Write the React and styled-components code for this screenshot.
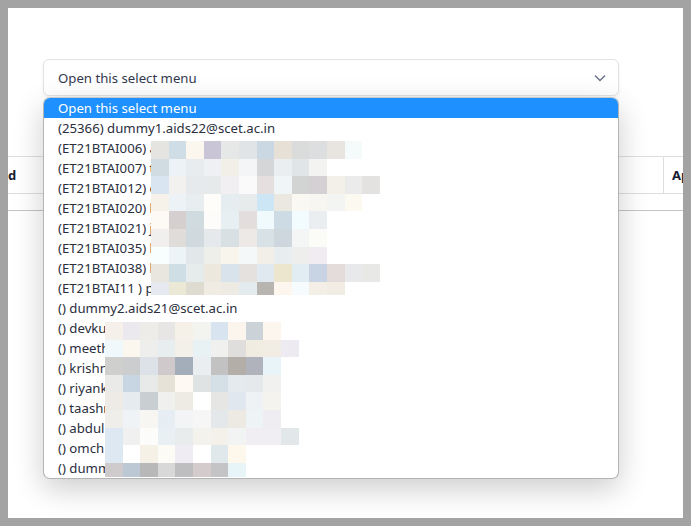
import React from 'react';
import styled, { createGlobalStyle } from 'styled-components';

const students = [
    '(25366) dummy1.aids22@scet.ac.in',
    '(ET21BTAI006) a',
    '(ET21BTAI007) t',
    '(ET21BTAI012) c',
    '(ET21BTAI020) h',
    '(ET21BTAI021) j',
    '(ET21BTAI035) h',
    '(ET21BTAI038) h',
    '(ET21BTAI11 ) p',
    '() dummy2.aids21@scet.ac.in',
    '() devku',
    '() meeth',
    '() krishn',
    '() riyank',
    '() taashn',
    '() abdul',
    '() omch',
    '() dumm',
];

const upperBlur = [
    ['e6e4e0', 'cfdde6', 'fbf6ee', 'c9c4d6', 'e6e8e8', 'e1e4e6', 'c9d8e2', 'e6e0d6', 'dadcdc', 'dcdee0', 'e8e5e0', 'f5fafa'],
    ['d0dce2', 'ecf2f5', 'e8ecee', 'eef0f3', 'f2efe8', 'f3f5f7', 'd4d6d8', 'ebeef0', 'e0e6e8', 'f3f3f1'],
    ['d9e5f0', 'f3f0f0', 'e6eaec', 'e6eaea', 'f2eff3', 'fafafa', 'e6dfdf', 'f0f6f7', 'd2d4d4', 'd4d0d4', 'f3f0ea', 'ecebeb', 'e4e2e0'],
    ['f6f2ea', 'ecf2f5', 'e8eef0', 'fefdfa', 'e6edf0', 'e8ebec', 'cde6f5', 'ebe8e2', 'faf8f2', 'f7f6f1', 'f3f5f3', 'fcf9f0'],
    ['fdfaf5', 'd6cfd0', 'd0dbe0', 'fdfcfa', 'e8eff2', 'e4dddd', 'f0f9fc', 'ccdbe4', 'f2fbfe', 'ebeef0'],
    ['f0efee', 'e0dcda', 'd0d9dd', 'e6e9eb', 'd8e0e4', 'ece9e6', 'd8e1e5', 'cfd7de', 'f4f5f5', 'fbfbf7'],
    ['f8fdfd', 'ecf4f7', 'e2e7e9', 'eeefea', 'f8f5ec', 'f5f8f9', 'f2efe8', 'e8edef', 'eeefed', 'f0ecf2'],
    ['e9e6e0', 'cfdde4', 'e6ebec', 'ece8de', 'd8e3ec', 'e5e1df', 'e0e9f0', 'ede6cf', 'e2edf3', 'c8d3e4', 'e4dcdb', 'e8e9eb', 'e8e9e7'],
    ['e6e9f0', 'ece8d6', 'dedbd0', 'f0ece4', 'eeeae4', 'e4ebef', 'b8b4b0', 'fcf6ee', 'f6fcfd', 'f3eee6', 'f2ede4'],
];

const lowerBlur = [
    ['f5f1ea', 'ebe8ee', 'eeece8', 'e8e6e4', 'f5f0e8', 'f3f3f0', 'd8e4ef', 'fcf5ee', 'ccd3d8', 'fcf6ee'],
    ['f0f8fb', 'fcf7ee', 'eeeeec', 'e8edef', 'f2f0e8', 'e8f1f4', 'f0f0ee', 'e0dedc', 'f1ece2', 'f1ece4', 'eeeaf1'],
    ['cfcfce', 'cccdcf', 'dde2e8', 'cfc9cb', 'a4aebb', 'ebeef0', 'c2c2c2', 'b4aea8', 'b0b2bc', 'e8f4f7'],
    ['eaeae8', 'c8d6e4', 'e8eaea', 'e6e2d8', 'fef9f2', 'e0e3e4', 'd4dfe6', 'e4eaee', 'e6e9eb', 'f1f1ef'],
    ['eeebe6', 'e6ebef', 'c8ced2', 'f0f0ee', 'eeeae4', 'ffffff', 'e6e6e4', 'e0e7ef', 'eef2f5', 'f5f3ee'],
    ['f0eeea', 'f0f3f5', 'f7f6f2', 'e6eef3', 'f2f4f5', 'f6f6f6', 'e4e8ea', 'eceae2', 'eef3f6', 'f0edf2'],
    ['dde8f3', 'f0f0f0', 'fcfcfa', 'e8f0f3', 'e9ecec', 'f4f2ec', 'f4f0ea', 'f2f4f3', 'f0eef3', 'f0edf3', 'e2e8ea'],
    ['dde8f3', 'ffffff', 'f5f1e7', 'fdfbf6', 'f0ecf3', 'ffffff', 'e0e8ec', 'fdf7ec'],
    ['cfcbcc', 'bcc8d4', 'b8b8b8', 'd8d8d8', 'bebec0', 'd4cccc', 'c4c4c6', 'e8f5f8'],
];

function Blur({ rows, top, left, lastHeight }) {
    return (
        <BlurPatch $top={top} $left={left}>
            {rows.map((row, i) => (
                <BlurRow key={i} $height={i === rows.length - 1 ? lastHeight : 17.6}>
                    {row.map((color, j) => (
                        <BlurCell key={j} $color={color} />
                    ))}
                </BlurRow>
            ))}
        </BlurPatch>
    );
}

export default function App() {
    return (
        <Sheet>
            <GlobalStyle />

            {/* SELECT */}
            <SelectWrap>
                <SelectBox>
                    Open this select menu
                    <svg width="14" height="8" viewBox="0 0 14 8" fill="none">
                        <path d="M2 1.5 7 6.5l5-5" stroke="#6c7189" strokeWidth="1.5" />
                    </svg>
                </SelectBox>

                {/* OPEN LIST */}
                <Menu>
                    <Option $active>Open this select menu</Option>
                    {students.map((s) => (
                        <Option key={s}>{s}</Option>
                    ))}
                    <Blur rows={upperBlur} top={43} left={107} lastHeight={13} />
                    <Blur rows={lowerBlur} top={224} left={61} lastHeight={14} />
                </Menu>
            </SelectWrap>

            {/* TABLE BEHIND */}
            <TableHead>
                <HeadCell>d</HeadCell>
                <LastHeadCell>Ap</LastHeadCell>
            </TableHead>
            <TableBody />
        </Sheet>
    );
}

const GlobalStyle = createGlobalStyle`
    html, body {
        margin: 0;
        height: 100%;
        background: #a3a3a3;
    }
    body {
        padding: 8px;
        box-sizing: border-box;
        overflow: hidden;
        font-family: "Noto Sans", "Open Sans", sans-serif;
    }
`;

const Sheet = styled.div`
    width: 675px;
    height: 510px;
    box-sizing: border-box;
    padding-top: 51px;
    background: #fff;
    overflow: hidden;
`;

const SelectWrap = styled.div`
    position: relative;
    z-index: 2;
    margin: 0 64px 60px 35px;
`;

const SelectBox = styled.div`
    height: 37px;
    box-sizing: border-box;
    padding: 0 11px 0 14px;
    display: flex;
    align-items: center;
    justify-content: space-between;
    font-size: 13.2px;
    color: #33384d;
    background: #fff;
    border: 1px solid #e2e2e2;
    border-radius: 6px;
    box-shadow: 0 2px 4px rgba(0, 0, 0, 0.05);
`;

const Menu = styled.div`
    position: absolute;
    top: 38px;
    left: 0;
    right: 0;
    overflow: hidden;
    background: #fff;
    border: 1px solid #b4b4b4;
    border-top-color: #c8c8c8;
    border-radius: 7px;
    box-shadow: 0 10px 30px rgba(0, 0, 0, 0.2);
`;

const Option = styled.div`
    height: 20px;
    line-height: 20px;
    padding-left: 14px;
    font-size: 13.2px;
    white-space: nowrap;
    color: ${(props) => (props.$active ? '#fff' : '#2a2e3d')};
    background: ${(props) => (props.$active ? '#1e90ff' : 'transparent')};
`;

const BlurPatch = styled.div`
    position: absolute;
    top: ${(props) => props.$top}px;
    left: ${(props) => props.$left}px;
`;

const BlurRow = styled.div`
    display: flex;
    height: ${(props) => props.$height}px;
`;

const BlurCell = styled.div`
    width: 17.6px;
    background: #${(props) => props.$color};
`;

const TableHead = styled.div`
    height: 38px;
    box-sizing: border-box;
    display: flex;
    justify-content: space-between;
    border-top: 1px solid #dedede;
    border-bottom: 1px solid #dedede;
`;

const TableBody = styled.div`
    height: 16px;
    border-bottom: 1px solid #c4c4c4;
`;

const HeadCell = styled.div`
    display: flex;
    align-items: center;
    font-size: 13px;
    font-weight: 700;
    color: #181c32;
`;

const LastHeadCell = styled(HeadCell)`
    width: 20px;
    box-sizing: border-box;
    padding-left: 8px;
    overflow: hidden;
    border-left: 1px solid #dedede;
`;
